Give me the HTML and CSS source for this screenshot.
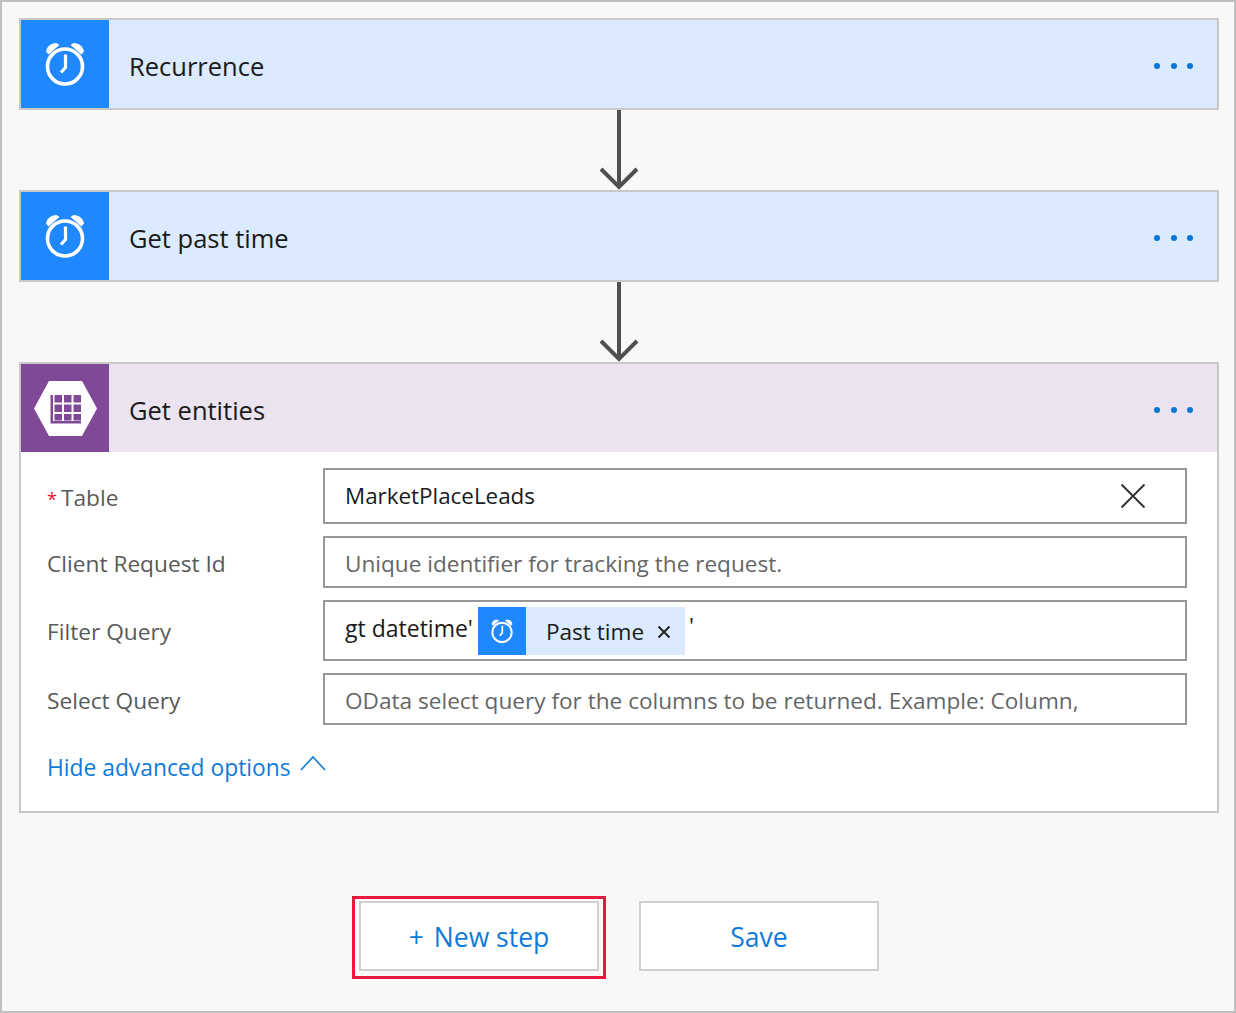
FILE: index.html
```html
<!DOCTYPE html>
<html lang="en">
<head>
    <meta charset="UTF-8">
    <meta name="viewport" content="width=device-width, initial-scale=1.0">
    <title>Get entities flow</title>
    <link rel="stylesheet" href="styles.css">
</head>
<body>
    <svg class="iconDefs" width="0" height="0">
        <symbol id="alarm" viewBox="0 0 40 46">
            <circle cx="20" cy="25.5" r="17.5" fill="none" stroke="#fff" stroke-width="3.6"/>
            <path d="M20.500 13.500v13l-4.500 5" fill="none" stroke="#fff" stroke-width="3.2"/>
            <path d="M1 10.500C2 5.500 6 2 11.500 2l3 2L3.500 13.500z" fill="#fff"/>
            <path d="M39 10.500C38 5.500 34 2 28.500 2l-3 2L36.500 13.500z" fill="#fff"/>
        </symbol>
    </svg>
    <div class="page">
        <div class="card blue">
            <div class="cardHead">
                <div class="iconBox"><svg class="alarmIcon"><use href="#alarm"/></svg></div>
                <div class="cardTitle">Recurrence</div>
                <div class="dots"><span></span><span></span><span></span></div>
            </div>
        </div>
        <div class="connector">
            <svg width="40" height="80" viewBox="0 0 40 80"><path d="M20 0v77M2 59L20 77 38 59" fill="none" stroke="#505050" stroke-width="4"/></svg>
        </div>
        <div class="card blue">
            <div class="cardHead">
                <div class="iconBox"><svg class="alarmIcon"><use href="#alarm"/></svg></div>
                <div class="cardTitle">Get past time</div>
                <div class="dots"><span></span><span></span><span></span></div>
            </div>
        </div>
        <div class="connector">
            <svg width="40" height="80" viewBox="0 0 40 80"><path d="M20 0v77M2 59L20 77 38 59" fill="none" stroke="#505050" stroke-width="4"/></svg>
        </div>
        <div class="card purple">
            <div class="cardHead">
                <div class="iconBox">
                    <svg width="63" height="55" viewBox="0 0 63 55">
                        <path d="M15 0h33l15 27.500L48 55H15L0 27.500z" fill="#fff"/>
                        <path d="M16.500 14h2.500v26h28v2.500H16.500z" fill="#804998"/>
                        <path d="M20.500 14h7.500v7.500h-7.500zM30 14h7.500v7.500H30zM39.500 14H47v7.500h-7.500zM20.500 23.500h7.500V31h-7.500zM30 23.500h7.500V31H30zM39.500 23.500H47V31h-7.500zM20.500 33h7.500v6.500h-7.500zM30 33h7.500v6.500H30zM39.500 33H47v6.500h-7.500z" fill="#804998"/>
                    </svg>
                </div>
                <div class="cardTitle">Get entities</div>
                <div class="dots"><span></span><span></span><span></span></div>
            </div>
            <div class="cardBody">
                <div class="fieldRow">
                    <label class="fieldLabel"><span class="req">*</span>Table</label>
                    <div class="field tall">
                        <span class="value">MarketPlaceLeads</span>
                        <svg class="clearIcon" width="26" height="26" viewBox="0 0 26 26"><path d="M1.500 1.500l23 23M24.500 1.500l-23 23" stroke="#333" stroke-width="2" fill="none"/></svg>
                    </div>
                </div>
                <div class="fieldRow">
                    <label class="fieldLabel">Client Request Id</label>
                    <div class="field"><span class="hint">Unique identifier for tracking the request.</span></div>
                </div>
                <div class="fieldRow">
                    <label class="fieldLabel filterLabel">Filter Query</label>
                    <div class="field filter">
                        <span class="value typed">gt datetime'</span>
                        <span class="token">
                            <span class="tokenIcon"><svg class="alarmSmall"><use href="#alarm"/></svg></span>
                            <span class="tokenText">Past time</span>
                            <svg class="tokenClose" width="14" height="14" viewBox="0 0 14 14"><path d="M1.500 1.500l11 11M12.500 1.500l-11 11" stroke="#222" stroke-width="2" fill="none"/></svg>
                        </span>
                        <span class="value tail">'</span>
                    </div>
                </div>
                <div class="fieldRow">
                    <label class="fieldLabel">Select Query</label>
                    <div class="field"><span class="hint">OData select query for the columns to be returned. Example: Column,</span></div>
                </div>
                <a class="advanced" href="#">Hide advanced options
                    <svg width="26" height="16" viewBox="0 0 26 16"><path d="M1 15L13 2l12 13" fill="none" stroke="#0f7ad8" stroke-width="1.600"/></svg>
                </a>
            </div>
        </div>
        <div class="actions">
            <div class="highlight"><button class="btn"><span class="plus">+</span>New step</button></div>
            <button class="btn">Save</button>
        </div>
    </div>
</body>
</html>
```

FILE: styles.css
```css
* {
    box-sizing: border-box;
}
body {
    margin: 0;
    font-family: "Open Sans", "Noto Sans", sans-serif;
}
.iconDefs {
    position: absolute;
}
.page {
    width: 1236px;
    height: 1013px;
    padding: 16px 15px 0 17px;
    background-color: #f8f8f8;
    border: 2px solid #bfbfbf;
}
.card {
    border: 2px solid #c8c8c8;
}
.cardHead {
    display: flex;
    align-items: center;
    height: 88px;
}
.blue .cardHead {
    background-color: #dbeafe;
}
.purple .cardHead {
    background-color: #ece3f0;
}
.blue .iconBox {
    background-color: #2088ff;
}
.purple .iconBox {
    background-color: #804998;
}
.iconBox {
    display: flex;
    align-items: center;
    justify-content: center;
    width: 88px;
    height: 88px;
    flex: none;
}
.alarmIcon {
    width: 40px;
    height: 46px;
}
.cardTitle {
    flex: 1;
    margin-left: 20px;
    padding-top: 4px;
    font-size: 25.500px;
    color: #1a1a1a;
}
.dots {
    display: flex;
    gap: 10.500px;
    margin: 4px 24px 0 0;
}
.dots span {
    width: 6px;
    height: 6px;
    border-radius: 50%;
    background-color: #0078d7;
}
.connector {
    display: flex;
    justify-content: center;
    height: 80px;
}
.cardBody {
    height: 359px;
    padding: 16px 30px 0 26px;
    background-color: #fff;
}
.fieldRow {
    display: flex;
    align-items: center;
    margin-bottom: 12px;
}
.fieldLabel {
    width: 276px;
    flex: none;
    padding-top: 3px;
    font-size: 22.700px;
    color: #595959;
}
.filterLabel {
    padding-top: 1px;
}
.req {
    margin-right: 4px;
    font-size: 18px;
    color: #e8112d;
}
.field {
    display: flex;
    align-items: center;
    flex: 1;
    height: 52px;
    padding: 0 20px;
    border: 2px solid #979797;
    font-size: 22.400px;
}
.tall {
    height: 56px;
}
.tall .value {
    padding-bottom: 2px;
}
.filter {
    height: 61px;
}
.value {
    color: #1a1a1a;
}
.typed {
    padding-bottom: 6px;
    font-size: 23px;
}
.hint {
    padding-top: 3px;
    font-size: 22.600px;
    color: #666;
}
.clearIcon {
    margin-left: auto;
    margin-right: 19px;
}
.token {
    display: flex;
    align-items: center;
    height: 48px;
    margin-left: 5px;
    background-color: #dbeafe;
    color: #1a1a1a;
}
.tokenIcon {
    display: flex;
    align-items: center;
    justify-content: center;
    width: 48px;
    height: 48px;
    background-color: #2088ff;
}
.alarmSmall {
    width: 22px;
    height: 26px;
}
.tokenText {
    margin: 2px 13px 0 20px;
    font-size: 22.600px;
}
.tokenClose {
    margin: 3px 14px 0 0;
}
.tail {
    align-self: flex-start;
    margin: 8px 0 0 4px;
}
.advanced {
    display: inline-flex;
    align-items: center;
    gap: 9px;
    margin-top: 15px;
    font-size: 22.800px;
    color: #0f7ad8;
    text-decoration: none;
}
.advanced svg {
    margin-bottom: 10px;
}
.actions {
    display: flex;
    align-items: flex-start;
    gap: 33px;
    margin: 83px 0 0 333px;
}
.highlight {
    padding: 2px 4px 5px;
    border: 3px solid #e81a3b;
}
.btn {
    width: 240px;
    height: 70px;
    padding: 1px 0 0;
    background-color: #fff;
    border: 2px solid #d0d0d0;
    color: #0f7ad8;
    font-family: inherit;
    font-size: 26.500px;
}
.plus {
    margin-right: 10px;
}
.actions > .btn {
    margin-top: 5px;
}
```
